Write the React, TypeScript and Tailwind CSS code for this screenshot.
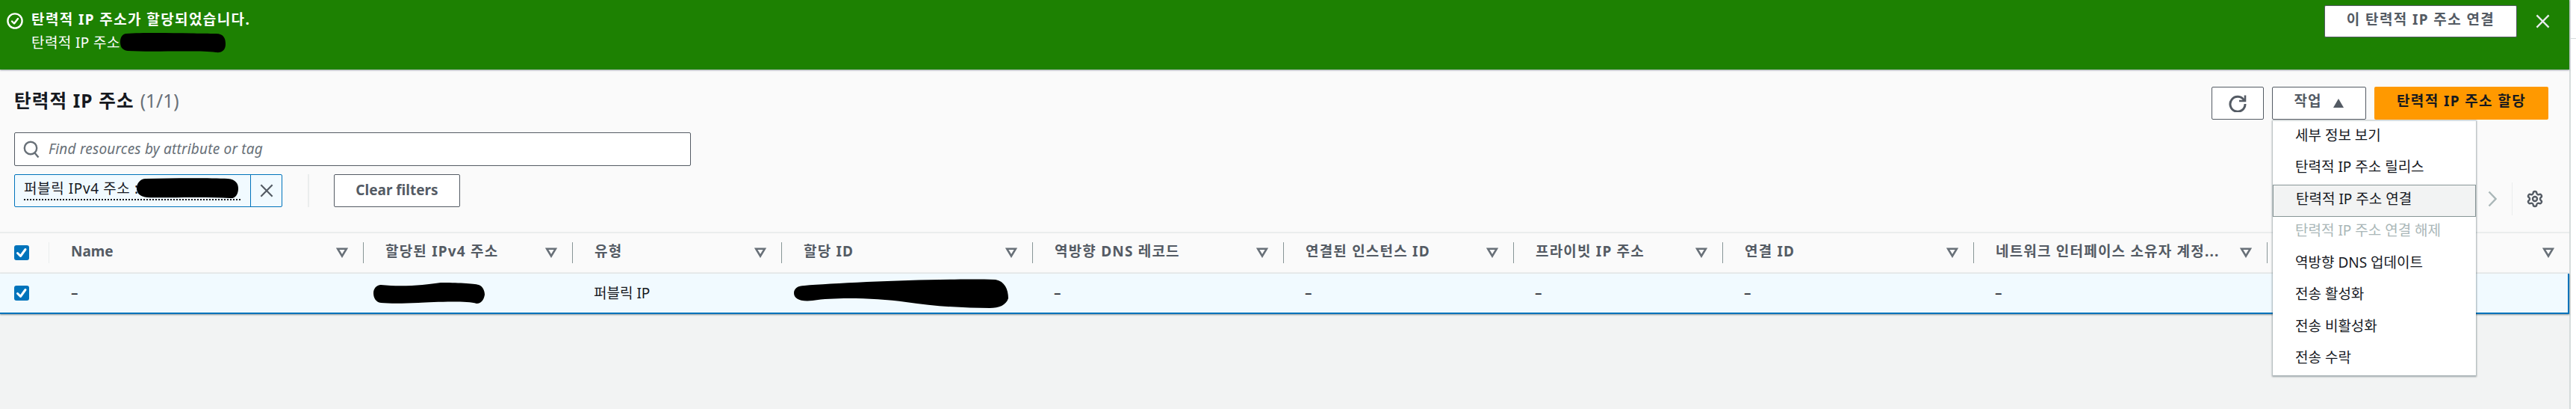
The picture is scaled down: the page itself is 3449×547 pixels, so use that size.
import { Settings } from 'lucide-react';

const columns = [
  { label: 'Name', cell: '–' },
  { label: '할당된 IPv4 주소', cell: 'ip' },
  { label: '유형', cell: '퍼블릭 IP' },
  { label: '할당 ID', cell: 'id' },
  { label: '역방향 DNS 레코드', cell: '–' },
  { label: '연결된 인스턴스 ID', cell: '–' },
  { label: '프라이빗 IP 주소', cell: '–' },
  { label: '연결 ID', cell: '–' },
  { label: '네트워크 인터페이스 소유자 계정...', cell: '–' },
  { label: '', cell: '' },
];

const menuItems = [
  '세부 정보 보기',
  '탄력적 IP 주소 릴리스',
  '탄력적 IP 주소 연결',
  '탄력적 IP 주소 연결 해제',
  '역방향 DNS 업데이트',
  '전송 활성화',
  '전송 비활성화',
  '전송 수락',
];

const gridCols = 'grid grid-cols-[66px_420px_280px_280px_336px_336px_308px_280px_336px_393px_1fr]';

function Checkbox() {
  return (
    <span className="flex h-[20px] w-[20px] items-center justify-center rounded-[3px] bg-[#0073bb]">
      <svg viewBox="0 0 20 20" className="h-[20px] w-[20px]" fill="none" stroke="#fff" strokeWidth="3" strokeLinecap="round" strokeLinejoin="round">
        <path d="M4.5 10.5 8.5 14.5 15 5.5" />
      </svg>
    </span>
  );
}

function FilterCaret() {
  return (
    <svg viewBox="0 0 16 14" className="h-[14px] w-[16px] shrink-0" fill="none" stroke="#687078" strokeWidth="2.6" strokeLinejoin="miter">
      <path d="M2.2 1.8h11.6L8 11.5z" />
    </svg>
  );
}

function CloseIcon({ className, color }: { className: string; color: string }) {
  return (
    <svg viewBox="0 0 20 20" className={className} fill="none" stroke={color} strokeWidth="2.4">
      <path d="M1.5 1.5l17 17M18.5 1.5l-17 17" />
    </svg>
  );
}

export default function App() {
  return (
    <div className="flex h-[547px] w-[3449px] overflow-hidden bg-white font-['Noto_Sans','Noto_Sans_CJK_KR',sans-serif] text-[19px] text-[#16191f]">
      <div className="relative h-full w-[3442px] shrink-0 border-r-2 border-[#d5dbdb] bg-[#f2f3f3]">
        {/* flash banner */}
        <div className="relative z-10 flex h-[93px] justify-between bg-[#1d8102] text-white shadow-[0_1px_2px_0_rgba(0,28,36,0.4)]">
          <div className="flex pl-[9px] pt-[12px]">
            <svg viewBox="0 0 22 22" className="mt-[5px] h-[22px] w-[22px]" fill="none" stroke="#fff" strokeWidth="2.4" strokeLinecap="round" strokeLinejoin="round">
              <circle cx="11" cy="11" r="9.6" />
              <path d="M7 11.5l3 3 5-6.5" />
            </svg>
            <div className="ml-[11px]">
              <div className="h-[30px] font-bold leading-[28px] tracking-[1.4px]">탄력적 IP 주소가 할당되었습니다.</div>
              <div className="flex h-[30px] items-center leading-[30px] tracking-[0.4px]">
                탄력적 IP 주소
                <svg viewBox="0 0 141 27" className="h-[27px] w-[141px]">
                  <path d="M8 1C40 -1 100 1 128 1C139 1 141 8 141 15C141 23 136 27 128 26C100 23 40 26 10 24C2 23 0 18 0 12C0 6 3 1 8 1Z" fill="#000" />
                </svg>
              </div>
            </div>
          </div>
          <div className="flex items-start pt-[7px]">
            <button className="flex h-[43px] w-[258px] items-center justify-center rounded-[2px] border border-[#545b64] bg-white pb-[4px] font-bold tracking-[1.4px] text-[#545b64]">
              이 탄력적 IP 주소 연결
            </button>
            <span className="ml-[25px] mr-[26px] mt-[12px]">
              <CloseIcon className="h-[19px] w-[19px]" color="#e9ebed" />
            </span>
          </div>
        </div>

        {/* table header */}
        <div className="flex h-[217px] justify-between bg-[#fafafa] pl-[19px] pr-[28px] pt-[23px]">
          <div>
            <div className="flex h-[38px] items-center text-[24.6px] leading-[38px]">
              <span className="font-bold tracking-[1.1px]">탄력적 IP 주소</span>
              <span className="ml-[8px] text-[#687078]">(1/1)</span>
            </div>
            <div className="mt-[23px] flex h-[45px] w-[906px] items-center rounded-[2px] border border-[#545b64] bg-white pl-[11px]">
              <svg viewBox="0 0 22 24" className="h-[24px] w-[22px]" fill="none" stroke="#687078" strokeWidth="2.4">
                <circle cx="10" cy="10" r="8.2" />
                <path d="M15.5 16.5l5 6" />
              </svg>
              <span className="ml-[12px] italic tracking-[0.2px] text-[#687078]">Find resources by attribute or tag</span>
            </div>
            <div className="mt-[11px] flex h-[44px]">
              <div className="flex h-[44px] w-[359px] rounded-[2px] border border-[#0073bb] bg-[#f1faff]">
                <div className="flex w-[315px] pl-[12px] pt-[3px]">
                  <div className="flex h-[31px] w-[290px] items-center border-b-2 border-dotted border-[#16191f] leading-[28px] tracking-[0.6px] whitespace-nowrap">
                    퍼블릭 IPv4 주소 :
                    <svg viewBox="0 0 136 28" className="ml-[-3px] h-[28px] w-[136px] shrink-0">
                      <path d="M12 1C50 0 100 0 122 1C133 2 136 8 136 14C136 22 132 28 125 27C90 25 40 27 14 26C4 25 0 20 0 14C0 7 5 1 12 1Z" fill="#000" />
                    </svg>
                  </div>
                </div>
                <div className="flex flex-1 items-center justify-center border-l border-[#0073bb]">
                  <CloseIcon className="h-[20px] w-[18px]" color="#545b64" />
                </div>
              </div>
              <span className="ml-[34px] h-[44px] w-[2px] bg-[#eaeded]" />
              <button className="ml-[33px] flex h-[44px] w-[169px] items-center justify-center rounded-[2px] border border-[#545b64] bg-white pb-[2px] font-bold text-[#545b64]">
                Clear filters
              </button>
            </div>
          </div>

          <div className="flex flex-col">
            <div className="flex h-[44px]">
              <button className="flex h-[44px] w-[70px] items-center justify-center rounded-[2px] border border-[#545b64] bg-white">
                <svg viewBox="0 0 24 24" className="h-[24px] w-[24px]" fill="none" stroke="#545b64" strokeWidth="3">
                  <path d="M20.5 8A10 10 0 1 0 22 13" />
                  <path d="M22 1.5V9h-8" strokeWidth="2.6" />
                </svg>
              </button>
              <button className="ml-[11px] flex h-[44px] w-[126px] items-center justify-center rounded-[2px] border border-[#545b64] bg-white font-bold text-[#545b64]">
                <span className="pb-[5px] tracking-[1px]">작업</span>
                <svg viewBox="0 0 14 12" className="ml-[16px] h-[12px] w-[14px]" fill="#545b64">
                  <path d="M7 0l7 12H0z" />
                </svg>
              </button>
              <button className="ml-[11px] flex h-[44px] w-[233px] items-center justify-center rounded-[2px] bg-[#ff9900] pb-[5px] font-bold tracking-[1.4px] text-[#16191f]">
                탄력적 IP 주소 할당
              </button>
            </div>
            <div className="mt-[84px] flex h-[44px] items-center justify-end pr-[6px]">
              <svg viewBox="0 0 12 22" className="h-[22px] w-[12px]" fill="none" stroke="#aab7b8" strokeWidth="2.4">
                <path d="M1.5 1.5 10.5 11 1.5 20.5" />
              </svg>
              <span className="ml-[20px] h-[44px] w-px bg-[#eaeded]" />
              <Settings className="ml-[18px] h-[24px] w-[24px] text-[#545b64]" strokeWidth={2.4} />
            </div>
          </div>
        </div>

        {/* table */}
        <div className="border-t-2 border-[#eaeded] bg-[#fafafa]">
          <div className={`${gridCols} h-[54px] border-b-2 border-[#eaeded] font-bold text-[#545b64]`}>
            <div className="flex items-center justify-between">
              <span className="ml-[19px]"><Checkbox /></span>
              <span className="h-[28px] w-px bg-[#eaeded]" />
            </div>
            {columns.map((col, i) => (
              <div key={i} className="flex items-center pr-[20px]">
                <span className={i === 0 ? 'hidden' : 'h-[28px] w-px bg-[#879596]'} />
                <span className={`min-w-0 flex-1 truncate pb-[3px] pl-[29px] ${i === 0 ? '' : 'tracking-[1.2px]'}`}>{col.label}</span>
                <FilterCaret />
              </div>
            ))}
          </div>
          <div className={`${gridCols} h-[54px] border-r-2 border-b-2 border-[#0073bb] bg-[#f1faff] shadow-[0_1px_2px_0_rgba(0,28,36,0.45)]`}>
            <div className="flex items-center pl-[19px]"><Checkbox /></div>
            {columns.map((col, i) => (
              <div key={i} className={`flex items-center ${col.cell === 'ip' ? 'pl-[14px]' : col.cell === 'id' ? 'pl-[17px]' : 'pl-[29px]'}`}>
                {col.cell === 'ip' ? (
                  <svg viewBox="0 0 149 29" className="h-[29px] w-[149px]">
                    <path d="M10 3C40 6 70 3 90 0C110 0 135 1 141 3C147 5 149 12 149 16C148 22 145 28 138 28C125 24 80 26 60 27C40 28 20 28 10 27C3 26 0 20 0 14C0 8 4 3 10 3Z" fill="#000" />
                  </svg>
                ) : col.cell === 'id' ? (
                  <svg viewBox="0 0 287 40" className="h-[40px] w-[287px]">
                    <path d="M14 10C60 6 200 0 270 2C282 4 287 15 287 27C284 36 275 40 262 40C230 40 190 38 150 32C110 27 60 25 25 30C8 32 0 27 0 20C0 14 5 10 14 10Z" fill="#000" />
                  </svg>
                ) : (
                  col.cell
                )}
              </div>
            ))}
          </div>
        </div>

        {/* actions menu */}
        <div className="absolute left-[3043px] top-[161px] z-20 w-[272px] border-t border-[#d5dbdb] bg-white shadow-[0_1px_2px_1px_rgba(0,28,36,0.35)]">
          {menuItems.map((item, i) => (
            <div
              key={item}
              className={`flex h-[42.5px] items-center whitespace-nowrap pl-[30px] pb-[5px] ${
                i === 2 ? 'border border-[#879596] bg-[#f2f3f3] pl-[29px]' : ''
              } ${i === 3 ? 'text-[#aab7b8]' : ''}`}
            >
              {item}
            </div>
          ))}
        </div>
      </div>

      {/* right gutter */}
      <div className="flex-1 pt-[51px]">
        <div className="h-px bg-[#d5dbdb]" />
      </div>
    </div>
  );
}
